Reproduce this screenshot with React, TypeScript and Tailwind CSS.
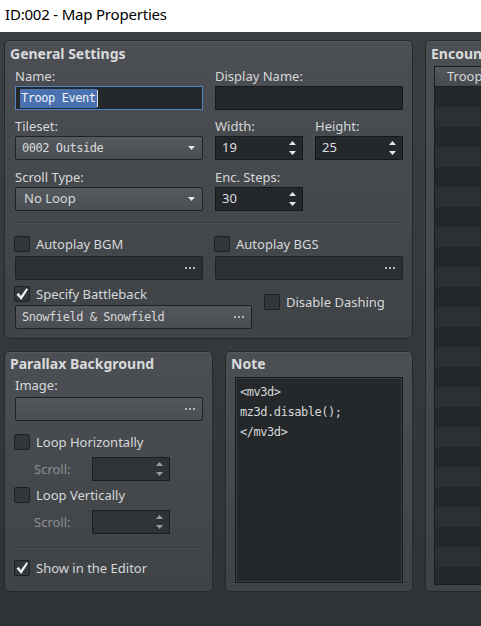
import React from "react";

const SANS = "font-['Noto_Sans',sans-serif]";
const MONO = "font-['DejaVu_Sans_Mono',monospace] text-[12px] tracking-[-0.45px]";

function Panel({ className = "", children }: { className?: string; children?: React.ReactNode }) {
  return (
    <div
      className={`rounded-[5px] border border-[#26282b] bg-linear-to-b from-[#4b4e52] to-[#404346] shadow-[inset_0_1px_0_#55585c] overflow-hidden ${className}`}
    >
      {children}
    </div>
  );
}

function Title({ children, className = "" }: { children: React.ReactNode; className?: string }) {
  return (
    <div className={`h-[18px] leading-[18px] text-[14px] font-bold text-[#d8dadc] whitespace-nowrap ${className}`}>
      {children}
    </div>
  );
}

function Label({ children, className = "", dim = false }: { children: React.ReactNode; className?: string; dim?: boolean }) {
  return (
    <div
      className={`h-[18px] leading-[18px] text-[13px] whitespace-nowrap ${dim ? "text-[#8d9093]" : "text-[#d6d8da]"} ${className}`}
    >
      {children}
    </div>
  );
}

function CheckMark() {
  return (
    <svg width="14" height="14" viewBox="0 0 14 14">
      <path d="M1.4 7.4 L3.9 5.9 L5.8 9.0 L11.5 1.2 L13.1 2.2 L6.3 12.9 Z" fill="#eceef0" />
    </svg>
  );
}

function Check({ checked = false, label, className = "" }: { checked?: boolean; label: string; className?: string }) {
  return (
    <div className={`flex items-center h-[16px] ${className}`}>
      <div className="w-[16px] h-[16px] shrink-0 rounded-[2px] border border-[#1d1f21] bg-[#33363a] flex items-center justify-center">
        {checked && <CheckMark />}
      </div>
      <span className="ml-[6px] text-[13px] leading-[18px] text-[#d6d8da] whitespace-nowrap">{label}</span>
    </div>
  );
}

function Arrow({ up = false, color = "#e4e6e8" }: { up?: boolean; color?: string }) {
  return (
    <svg width="7" height="4" viewBox="0 0 7 4">
      <path d={up ? "M0 4 L3.5 0 L7 4 Z" : "M0 0 L7 0 L3.5 4 Z"} fill={color} />
    </svg>
  );
}

function SelectBox({ value, mono = false, className = "" }: { value: string; mono?: boolean; className?: string }) {
  return (
    <div
      className={`h-[24px] rounded-[2px] border border-[#202224] bg-linear-to-b from-[#56595d] to-[#4a4d51] flex items-center justify-between pr-[7px] ${className}`}
    >
      <span className={mono ? `${MONO} pl-[6px] text-[#d8dadc]` : `pl-[8px] text-[13px] text-[#d6d8da]`}>{value}</span>
      <Arrow />
    </div>
  );
}

function Spin({ value, disabled = false, className = "" }: { value?: string; disabled?: boolean; className?: string }) {
  const c = disabled ? "#9a9da0" : "#e4e6e8";
  return (
    <div
      className={`h-[24px] border ${disabled ? "border-[#1c1e20] bg-[#303336]" : "border-[#17191b] bg-[#25282b]"} flex items-center justify-between pl-[6px] pr-[6px] ${className}`}
    >
      <span className="text-[13px] text-[#dcdee0]">{value}</span>
      <div className="flex flex-col gap-[6px]">
        <Arrow up color={c} />
        <Arrow color={c} />
      </div>
    </div>
  );
}

function Dots() {
  return (
    <div className="flex gap-[2px]">
      <span className="w-[2px] h-[2px] bg-[#b4b7ba]" />
      <span className="w-[2px] h-[2px] bg-[#b4b7ba]" />
      <span className="w-[2px] h-[2px] bg-[#b4b7ba]" />
    </div>
  );
}

function PickField({ value, light = false, className = "" }: { value?: string; light?: boolean; className?: string }) {
  return (
    <div
      className={`h-[24px] rounded-[2px] border border-[#1e2022] flex items-center justify-between pr-[7px] ${
        light ? "bg-linear-to-b from-[#54575b] to-[#4a4d51]" : "bg-[#2d3033]"
      } ${className}`}
    >
      <span className={`${MONO} pl-[6px] text-[#d6d8da] whitespace-nowrap`}>{value}</span>
      <Dots />
    </div>
  );
}

function Separator({ className = "" }: { className?: string }) {
  return (
    <div className={`flex flex-col ${className}`}>
      <div className="h-[1px] bg-[#36393c]" />
      <div className="h-[1px] bg-[#4d5053]" />
    </div>
  );
}

function GeneralSettings() {
  return (
    <Panel className="h-[299px] shrink-0">
      <Title className="mt-[4px] pl-[5px]">General Settings</Title>
      <div className="pl-[10px] pr-[9px]">
        <div className="grid grid-cols-[188px_188px] gap-x-[12px]">
          <div>
            <Label className="mt-[4px]">Name:</Label>
            <div className="mt-[1px] h-[24px] border border-[#4f84c4] bg-[#25282b] flex items-center pl-[4px]">
              <span className={`${MONO} leading-[19px] bg-[#4a72b0] text-[#eef2f8] px-[1px]`}>Troop Event</span>
              <span className="w-[1px] h-[17px] bg-[#d8dadc]" />
            </div>
          </div>
          <div>
            <Label className="mt-[4px]">Display Name:</Label>
            <div className="mt-[1px] h-[24px] border border-[#17191b] bg-[#25282b]" />
          </div>

          <div>
            <Label className="mt-[7px]">Tileset:</Label>
            <SelectBox className="mt-[1px]" value="0002 Outside" mono />
          </div>
          <div className="flex gap-[12px]">
            <div className="w-[88px]">
              <Label className="mt-[7px]">Width:</Label>
              <Spin className="mt-[1px]" value="19" />
            </div>
            <div className="w-[88px]">
              <Label className="mt-[7px]">Height:</Label>
              <Spin className="mt-[1px]" value="25" />
            </div>
          </div>

          <div>
            <Label className="mt-[8px]">Scroll Type:</Label>
            <SelectBox className="mt-[1px]" value="No Loop" />
          </div>
          <div className="w-[88px]">
            <Label className="mt-[8px]">Enc. Steps:</Label>
            <Spin className="mt-[1px]" value="30" />
          </div>
        </div>

        <Separator className="mt-[11px] -ml-[1px]" />

        <div className="grid grid-cols-[188px_188px] gap-x-[12px]">
          <div>
            <Check className="mt-[12px] -ml-[1px]" label="Autoplay BGM" />
            <PickField className="mt-[4px]" />
          </div>
          <div>
            <Check className="mt-[12px] -ml-[1px]" label="Autoplay BGS" />
            <PickField className="mt-[4px]" />
          </div>
        </div>

        <div className="flex gap-[12px]">
          <div className="w-[237px]">
            <Check className="mt-[6px] -ml-[1px]" checked label="Specify Battleback" />
            <PickField className="mt-[3px]" light value="Snowfield & Snowfield" />
          </div>
          <Check className="mt-[14px]" label="Disable Dashing" />
        </div>
      </div>
    </Panel>
  );
}

function ParallaxBackground() {
  return (
    <Panel className="w-[209px] h-full">
      <Title className="mt-[3px] pl-[5px]">Parallax Background</Title>
      <div className="pl-[10px] pr-[9px]">
        <Label className="mt-[3px]">Image:</Label>
        <PickField className="mt-[3px]" light />
        <Check className="mt-[13px] -ml-[1px]" label="Loop Horizontally" />
        <div className="mt-[7px] flex items-center">
          <Label dim className="w-[77px] pl-[19px]">Scroll:</Label>
          <Spin disabled className="w-[78px]" />
        </div>
        <Check className="mt-[6px] -ml-[1px]" label="Loop Vertically" />
        <div className="mt-[7px] flex items-center">
          <Label dim className="w-[77px] pl-[19px]">Scroll:</Label>
          <Spin disabled className="w-[78px]" />
        </div>
        <Separator className="mt-[13px] -ml-[1px]" />
        <Check className="mt-[11px] -ml-[1px]" checked label="Show in the Editor" />
      </div>
    </Panel>
  );
}

function NotePanel() {
  return (
    <Panel className="w-[188px] h-full">
      <Title className="mt-[3px] pl-[5px]">Note</Title>
      <div className="ml-[9px] mt-[4px] w-[168px] h-[206px] border border-[#17191b] bg-[#25282b] shadow-[inset_0_0_0_1px_#3a3d40] px-[4px] pt-[4px]">
        <div className={`${MONO} leading-[20px] text-[#d6d8da] whitespace-pre`}>
          {"<mv3d>\nmz3d.disable();\n</mv3d>"}
        </div>
      </div>
    </Panel>
  );
}

function EncounterPanel() {
  const rows = Array.from({ length: 25 });
  return (
    <Panel className="w-[200px] h-[552px] shrink-0">
      <Title className="mt-[4px] pl-[5px]">Encounters</Title>
      <div className="ml-[8px] mt-[3px] h-[519px] border border-[#1a1c1e] bg-[#25282a] overflow-hidden">
        <div className="h-[20px] bg-linear-to-b from-[#54575b] to-[#46494d] border-b border-[#1a1c1e] flex items-center pl-[12px] text-[13px] text-[#d6d8da]">
          Troop
        </div>
        {rows.map((_, i) => (
          <div key={i} className={`h-[20px] ${i % 2 === 0 ? "bg-[#25282a]" : "bg-[#2d3032]"}`} />
        ))}
      </div>
    </Panel>
  );
}

export default function App() {
  return (
    <div className={`${SANS} w-[481px] h-[626px] overflow-hidden flex flex-col bg-white`}>
      <div className="h-[32px] shrink-0 bg-white flex items-center pl-[5px] pb-[4px] text-[15px] text-black tracking-[-0.2px]">
        ID:002 - Map Properties
      </div>
      <div className="flex-1 flex gap-[12px] pl-[4px] pt-[8px] bg-linear-to-b from-[#3c3f42] to-[#303336]">
        <div className="w-[409px] shrink-0 flex flex-col gap-[12px]">
          <GeneralSettings />
          <div className="h-[241px] flex gap-[12px]">
            <ParallaxBackground />
            <NotePanel />
          </div>
        </div>
        <EncounterPanel />
      </div>
    </div>
  );
}
